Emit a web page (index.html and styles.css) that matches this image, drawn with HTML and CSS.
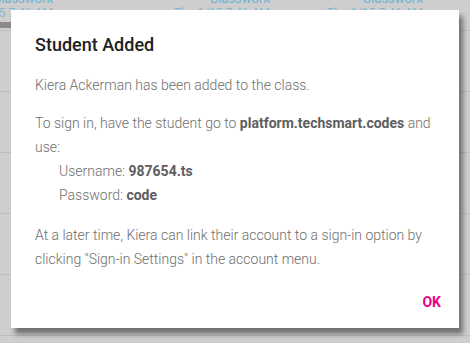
FILE: index.html
```html
<!DOCTYPE html>
<html lang="en">
<head>
    <meta charset="UTF-8">
    <meta name="viewport" content="width=device-width, initial-scale=1.0">
    <title>Roster - Student Added</title>
    <link rel="stylesheet" href="styles.css">
</head>
<body>
    <div class="roster">
        <div class="roster-row roster-head">
            <div class="cell cell-first">
                <div class="cell-link">Classwork</div>
                <div class="cell-date">Thu 1/15 7:46 AM</div>
            </div>
            <div class="cell cell-second">
                <div class="cell-link">Classwork</div>
                <div class="cell-date">Thu 1/15 7:46 AM</div>
            </div>
            <div class="cell cell-third">
                <div class="cell-link">Classwork</div>
                <div class="cell-date">Thu 1/15 7:46 AM</div>
            </div>
        </div>
        <div class="progress-strip"></div>
        <div class="roster-row"></div>
        <div class="roster-row"></div>
        <div class="roster-row"></div>
        <div class="roster-row"></div>
        <div class="roster-row"></div>
    </div>

    <div class="dialog">
        <h3 class="dialog-title">Student Added</h3>
        <div class="dialog-body">
            <p class="lead">Kiera Ackerman has been added to the class.</p>
            <p>To sign in, have the student go to <b>platform.techsmart.codes</b> and use:</p>
            <div class="credentials">
                <div>Username: <b>987654.ts</b></div>
                <div>Password: <b>code</b></div>
            </div>
            <p>At a later time, Kiera can link their account to a sign-in option by clicking "Sign-in Settings" in the account menu.</p>
        </div>
        <div class="dialog-actions">
            <button class="ok-btn">OK</button>
        </div>
    </div>
</body>
</html>
```

FILE: styles.css
```css
html, body {
    margin: 0;
    height: 100%;
    overflow: hidden;
}

body {
    background: #cecece;
    font-family: Roboto, "Liberation Sans", sans-serif;
}

.roster {
    margin-top: -14px;
}

.roster-row {
    height: 60px;
    border-bottom: 1px solid #bdbdbd;
}

.roster-head {
    height: 44px;
    position: relative;
}

.cell {
    position: absolute;
    top: 5px;
    text-align: right;
    font-size: 13px;
    line-height: 15px;
    color: #6cb3cf;
    white-space: nowrap;
}

.cell-first { right: 417px; }
.cell-second { right: 200px; }
.cell-third { right: 47px; }

.cell-date {
    font-size: 12px;
    color: #7fb9d0;
}

.progress-strip {
    height: 6px;
    background: #8a8a8a;
    margin-top: -9px;
    margin-bottom: 3px;
    width: 30px;
}

.dialog {
    position: absolute;
    left: 11px;
    top: 10px;
    width: 448px;
    height: 318px;
    box-sizing: border-box;
    background: #fff;
    box-shadow: 4px 6px 5px rgba(0, 0, 0, 0.45);
    display: flex;
    flex-direction: column;
}

.dialog-title {
    margin: 0;
    padding: 21px 24px 0;
    font-size: 18px;
    line-height: 28px;
    font-weight: 500;
    color: #212121;
}

.dialog-body {
    padding: 14px 24px 0;
    font-size: 14px;
    font-weight: 300;
    line-height: 24px;
    color: #6e6e6e;
    flex: 1;
    min-height: 0;
}

.dialog-body p {
    margin: 0 0 16px;
}

.dialog-body p.lead {
    margin-bottom: 14px;
}

.dialog-body b {
    color: #5e5e5e;
    font-weight: 700;
}

.credentials {
    padding-left: 24px;
    margin-top: -16px;
    margin-bottom: 16px;
}

.dialog-actions {
    display: flex;
    justify-content: flex-end;
    padding: 0 8px 8px;
}

.ok-btn {
    background: none;
    border: none;
    min-width: 64px;
    height: 36px;
    padding: 0 10px;
    font-family: Roboto, "Liberation Sans", sans-serif;
    font-size: 14px;
    font-weight: 700;
    color: #ec008c;
    text-align: right;
    cursor: pointer;
}
```
